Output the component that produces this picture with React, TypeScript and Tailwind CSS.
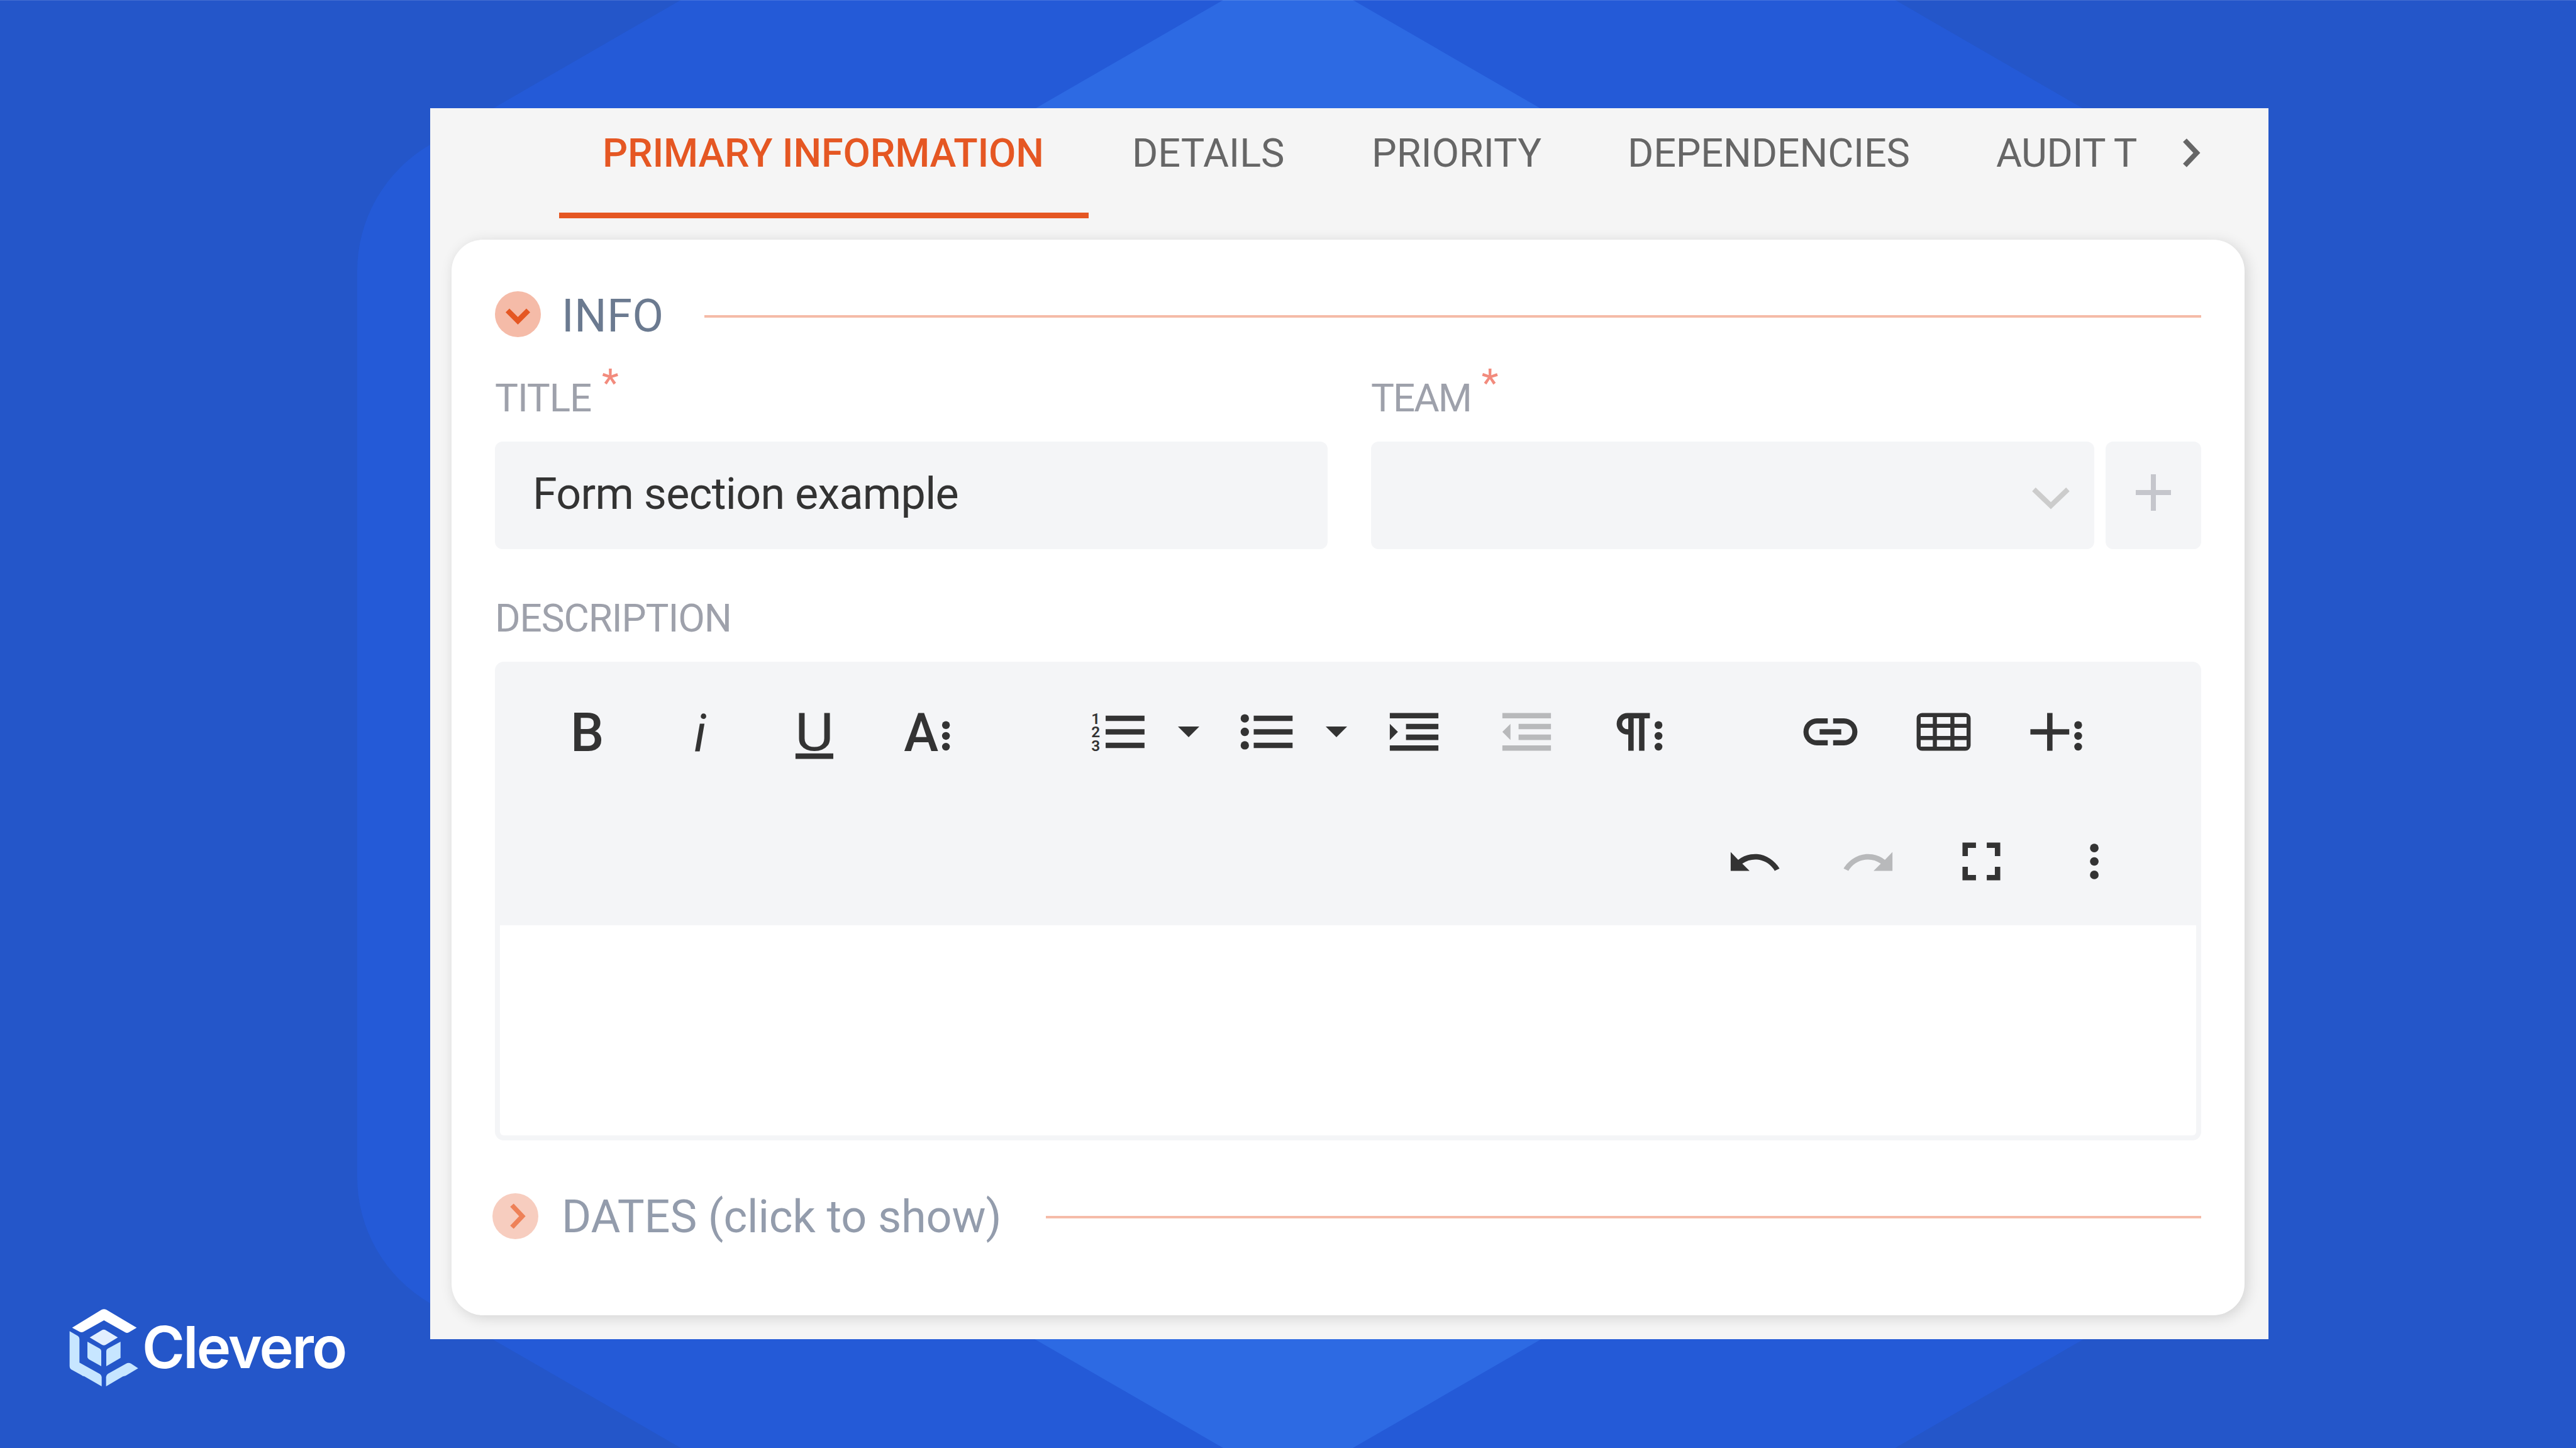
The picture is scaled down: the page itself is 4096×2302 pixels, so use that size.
import type { ReactNode } from "react";

function Icon({ children, muted = false, className = "" }: { children: ReactNode; muted?: boolean; className?: string }) {
  return (
    <svg
      viewBox="0 0 24 24"
      className={`h-[103px] w-[103px] shrink-0 font-['Roboto',sans-serif] ${muted ? "fill-[#b8b9bb]" : "fill-[#333333]"} ${className}`}
    >
      {children}
    </svg>
  );
}

/** Three stacked dots that mark a button with further options. */
function MoreDots({ x }: { x: number }) {
  return (
    <>
      <circle cx={x} cy="9.5" r="1.45" />
      <circle cx={x} cy="13.5" r="1.45" />
      <circle cx={x} cy="17.5" r="1.45" />
    </>
  );
}

function Caret({ className }: { className: string }) {
  return (
    <svg viewBox="0 0 8 4" className={`h-[17px] w-[34px] shrink-0 fill-[#333333] ${className}`}>
      <path d="M0 0h8L4 4z" />
    </svg>
  );
}

function Label({ text, required, star = "", tracking = "tracking-[-1.1px]" }: { text: string; required?: boolean; star?: string; tracking?: string }) {
  return (
    <div className={`flex h-[72px] items-start text-[62px] leading-[72px] text-[#9ea1ab] ${tracking}`}>
      <span>{text}</span>
      {required && <span className={`-mt-[24px] text-[#f28b7d] ${star}`}>*</span>}
    </div>
  );
}

function Section({ title, open }: { title: string; open: boolean }) {
  return (
    <div className={`flex h-20 items-center ${open ? "" : "-ml-1"}`}>
      <svg viewBox="0 0 73 73" className="h-[73px] w-[73px] shrink-0" fill="none">
        <circle cx="36.5" cy="36.5" r="36.5" className={open ? "fill-[#f5bba8]" : "fill-[#f7cdbf]"} />
        {open ? (
          <path d="M20 30.500l16.500 16.500L53 30.500" stroke="#e55723" strokeWidth="8.500" />
        ) : (
          <path d="M31 19l16.500 17.500L31 54" stroke="#ee8158" strokeWidth="7.500" />
        )}
      </svg>
      <span
        className={
          open
            ? "ml-[33px] w-[227px] shrink-0 pt-[7px] text-[72px] leading-[76px] tracking-[0.6px] text-[#6b7a90]"
            : "ml-[37px] w-[770px] shrink-0 pt-1 text-[72px] leading-[76px] whitespace-nowrap tracking-[-0.1px] text-[#939cac]"
        }
      >
        {title}
      </span>
      <div className={`h-[4px] flex-1 bg-[#f5bba8] ${open ? "mt-[7px]" : "mt-[4px]"}`} />
    </div>
  );
}

const tabs = [
  { label: "PRIMARY INFORMATION", cls: "w-[842px] pl-[69px] tracking-[-0.2px] font-medium text-[#e55723] border-[#e55723]" },
  { label: "DETAILS", cls: "w-[382px] pl-[69px] text-[#666666] border-transparent" },
  { label: "PRIORITY", cls: "w-[407px] pl-[68px] text-[#666666] border-transparent" },
  { label: "DEPENDENCIES", cls: "w-[588px] pl-[68px] tracking-[-0.2px] text-[#666666] border-transparent" },
  { label: "AUDIT T", cls: "w-[292px] pl-[66px] tracking-[-0.5px] text-[#666666] border-transparent" },
];

function Backdrop() {
  return (
    <svg viewBox="0 0 4096 2302" className="absolute inset-0 h-full w-full">
      <path
        d="M684 230L1082.500 0H3013.500L3412 230A232 232 0 0 1 3528 431V1871A232 232 0 0 1 3412 2072L3013.500 2302H1082.500L684 2072A232 232 0 0 1 568 1871V431A232 232 0 0 1 684 230Z"
        fill="#245ad7"
      />
      <path d="M1945 0H2151L3000 490V1812L2151 2302H1945L1096 1812V490Z" fill="#2d6ae3" />
      <rect width="4096" height="1" fill="#ffffff" fillOpacity="0.15" />
    </svg>
  );
}

function Logo() {
  return (
    <div className="flex items-center">
      <svg viewBox="90 120 330 375" className="h-[125px] w-[110px] shrink-0">
        <path fill="#fff" d="M104 212L244 127Q256 120 268 127L412 212L374 235Q366 239 358 235L256 177L158 232Q149 236 140 232Z" />
        <path fill="#c7e6ff" d="M92 229L132 252Q139 257 139 266V379L236 433Q245 439 245 447V492L162 444Q154 444 148 438L99 411Q92 406 92 396Z" />
        <path fill="#c7e6ff" d="M266 492V447Q266 439 275 432L361 384Q373 377 386 384L419 406L360 441Q352 444 346 445Z" />
        <path fill="#e2efff" d="M188 259L248 223Q255 219 262 223L322 259L264 294Q255 299 247 294Z" />
        <path fill="#c7e6ff" d="M177 279L236 312Q243 316 243 324V396L184 363Q177 359 177 352Z" />
        <path fill="#c7e6ff" d="M335 279V356L267 396V324Q267 317 274 312Z" />
      </svg>
      <span className="mb-[2px] ml-[6px] font-['Inter',sans-serif] text-[92px] leading-[110px] font-semibold tracking-[-2.6px] text-white">
        Clevero
      </span>
    </div>
  );
}

function Toolbar() {
  return (
    <div className="flex h-[419px] shrink-0 flex-col gap-[103px] pt-[60px]">
      <div className="flex items-center pl-[88px]">
        <Icon>
          <text x="5.600" y="19" fontSize="19.700" fontWeight="500">B</text>
        </Icon>
        <Icon className="ml-[77px]">
          <text x="9.400" y="19" fontSize="19.400" fontStyle="italic">i</text>
        </Icon>
        <Icon className="ml-[77px]">
          <text x="4.900" y="18.800" fontSize="19.400" textLength="14.400" lengthAdjust="spacingAndGlyphs">U</text>
          <path d="M5.100 20h14v2h-14z" />
        </Icon>
        <Icon className="ml-[77px]">
          <text x="3.300" y="19" fontSize="19.700" fontWeight="500" textLength="12.800" lengthAdjust="spacingAndGlyphs">A</text>
          <MoreDots x={18.9} />
        </Icon>
        <Icon className="ml-[199px]">
          <g fontSize="5.700" fontWeight="600">
            <text x="2.400" y="9">1</text>
            <text x="2.400" y="14">2</text>
            <text x="2.400" y="19">3</text>
          </g>
          <path d="M7.700 6h14.400v2H7.700zM7.700 11h14.400v2H7.700zM7.700 16h14.400v2H7.700z" />
        </Icon>
        <Caret className="ml-[45px]" />
        <Icon className="ml-[53px]">
          <circle cx="4.500" cy="7" r="1.550" />
          <circle cx="4.500" cy="12" r="1.550" />
          <circle cx="4.500" cy="17" r="1.550" />
          <path d="M7.800 6h14.400v2H7.800zM7.800 11h14.400v2H7.800zM7.800 16h14.400v2H7.800z" />
        </Icon>
        <Caret className="ml-[45px]" />
        <Icon className="ml-[55px]">
          <path d="M3 9v6l3-3zM3 19h18v-2H3zM3 7h18V5H3zM9 11h12V9H9zM9 15h12v-2H9z" />
        </Icon>
        <Icon muted className="ml-[76px]">
          <path d="M3 12l3 3V9zM3 19h18v-2H3zM3 7h18V5H3zM9 11h12V9H9zM9 15h12v-2H9z" />
        </Icon>
        <Icon className="ml-[77px]">
          <path fillRule="evenodd" d="M7.400 5H15.700V7H13.700V19H11.700V7H9.700V19H7.700V13H7.400A4 4 0 0 1 7.400 5ZM7.700 7H7.400A2 2 0 0 0 7.400 11H7.700Z" />
          <MoreDots x={18.9} />
        </Icon>
        <Icon className="ml-[200px]">
          <path d="M3.900 12A3.100 3.100 0 0 1 7 8.900h4V7H7a5 5 0 0 0 0 10h4v-1.900H7A3.100 3.100 0 0 1 3.900 12zM8 13h8v-2H8zM17 7h-4v1.900h4a3.100 3.100 0 0 1 0 6.200h-4V17h4a5 5 0 0 0 0-10z" />
        </Icon>
        <Icon className="ml-[77px]">
          <path
            fillRule="evenodd"
            d="M4 5h16a2 2 0 0 1 2 2v10a2 2 0 0 1-2 2H4a2 2 0 0 1-2-2V7a2 2 0 0 1 2-2zM3.500 6.500V9H8V6.500zM9.500 6.500V9h5V6.500zM16 6.500V9h4.500V6.500zM3.500 10.500v3H8v-3zM9.500 10.500v3h5v-3zM16 10.500v3h4.500v-3zM3.500 15v2.500H8V15zM9.500 15v2.500h5V15zM16 15v2.500h4.500V15z"
          />
        </Icon>
        <Icon className="ml-[77px]">
          <path d="M8.400 5h2v6h6.200v2h-6.200v6h-2v-6H2.200v-2h6.200z" />
          <MoreDots x={19.9} />
        </Icon>
      </div>
      <div className="flex items-center justify-end gap-[77px] pr-[110px]">
        <Icon>
          <path d="M10.400 9.400c-1.700.3-3.200.9-4.600 2L3 8.500v7h7l-2.700-2.700c3.700-2.600 8.800-1.800 11.500 1.900.2.300.4.500.5.800l1.800-.9c-2.200-3.600-6.400-6-10.700-5.200z" />
        </Icon>
        <Icon muted>
          <path d="M13.600 9.400c1.700.3 3.200.9 4.600 2L21 8.500v7h-7l2.700-2.700c-3.700-2.600-8.800-1.800-11.500 1.900-.2.300-.4.500-.5.800l-1.800-.9c2.200-3.600 6.400-6 10.700-5.200z" />
        </Icon>
        <Icon>
          <path d="M7 14H5v5h5v-2H7zM5 10h2V7h3V5H5zM17 17h-3v2h5v-5h-2zM14 5v2h3v3h2V5z" />
        </Icon>
        <Icon>
          <circle cx="11.900" cy="7" r="1.600" />
          <circle cx="11.900" cy="12" r="1.600" />
          <circle cx="11.900" cy="17" r="1.600" />
        </Icon>
      </div>
    </div>
  );
}

export default function App() {
  return (
    <div className="relative flex h-[2302px] w-[4096px] items-stretch overflow-hidden bg-[#2456c9] font-['Roboto',sans-serif]">
      <Backdrop />
      <aside className="relative flex w-[684px] shrink-0 flex-col justify-end pb-[97px] pl-[110px]">
        <Logo />
      </aside>
      <main className="relative mt-[172px] flex h-[1957px] w-[2923px] flex-col bg-[#f5f5f5]">
        <nav className="flex h-[175px] shrink-0 pl-[205px] text-[63px]">
          {tabs.map((t) => (
            <div key={t.label} className={`flex shrink-0 items-start border-b-[9px] pt-[32px] leading-[80px] whitespace-nowrap ${t.cls}`}>
              {t.label}
            </div>
          ))}
          <svg viewBox="0 0 30 48" className="mt-[47px] ml-[70px] h-[48px] w-[30px]" fill="none" stroke="#666666" strokeWidth="8">
            <path d="M4 4l19 20L4 44" />
          </svg>
        </nav>
        <section className="mt-[34px] mr-[38px] ml-[34px] flex h-[1710px] shrink-0 flex-col rounded-[50px] bg-white px-[69px] pt-[78px] shadow-[4px_4px_22px_rgba(0,0,0,0.14)]">
          <Section title="INFO" open />
          <div className="mt-[58px] flex gap-[69px]">
            <div className="w-[1324px]">
              <Label text="TITLE" required star="ml-[17px]" />
              <div className="mt-[33px] flex h-[171px] items-center rounded-[12px] bg-[#f4f5f7] pb-[4px] pl-[60px] text-[70px] tracking-[-0.7px] text-[#333333]">
                Form section example
              </div>
            </div>
            <div className="flex-1">
              <Label text="TEAM" required star="ml-[17px]" tracking="tracking-[-2px]" />
              <div className="mt-[33px] flex h-[171px] gap-[18px]">
                <div className="flex flex-1 items-center justify-end rounded-[12px] bg-[#f4f5f7] pr-[38px]">
                  <svg viewBox="0 0 62 36" className="mt-[9px] h-[36px] w-[62px]" fill="none" stroke="#cccccc" strokeWidth="8">
                    <path d="M4 4l27 26L58 4" />
                  </svg>
                </div>
                <div className="flex w-[152px] items-center justify-center rounded-[12px] bg-[#f4f5f7]">
                  <svg viewBox="0 0 58 58" className="mb-[9px] h-[58px] w-[58px]" stroke="#c5c6cc" strokeWidth="8">
                    <path d="M1 29h56M29 0v58" />
                  </svg>
                </div>
              </div>
            </div>
          </div>
          <div className="mt-[74px]">
            <Label text="DESCRIPTION" />
          </div>
          <div className="mt-[33px] mb-20 flex h-[761px] shrink-0 flex-col rounded-[14px] bg-[#f4f5f7] px-2 pb-2">
            <Toolbar />
            <div className="flex-1 rounded-b-[6px] bg-white" />
          </div>
          <Section title="DATES (click to show)" open={false} />
        </section>
      </main>
    </div>
  );
}
